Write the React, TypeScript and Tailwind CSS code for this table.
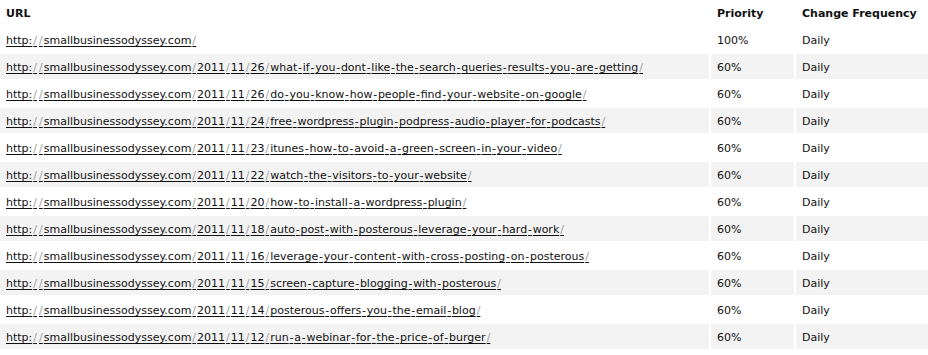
import React from "react";

const rows: [string, string][] = [
  ["http://smallbusinessodyssey.com/", "100%"],
  ["http://smallbusinessodyssey.com/2011/11/26/what-if-you-dont-like-the-search-queries-results-you-are-getting/", "60%"],
  ["http://smallbusinessodyssey.com/2011/11/26/do-you-know-how-people-find-your-website-on-google/", "60%"],
  ["http://smallbusinessodyssey.com/2011/11/24/free-wordpress-plugin-podpress-audio-player-for-podcasts/", "60%"],
  ["http://smallbusinessodyssey.com/2011/11/23/itunes-how-to-avoid-a-green-screen-in-your-video/", "60%"],
  ["http://smallbusinessodyssey.com/2011/11/22/watch-the-visitors-to-your-website/", "60%"],
  ["http://smallbusinessodyssey.com/2011/11/20/how-to-install-a-wordpress-plugin/", "60%"],
  ["http://smallbusinessodyssey.com/2011/11/18/auto-post-with-posterous-leverage-your-hard-work/", "60%"],
  ["http://smallbusinessodyssey.com/2011/11/16/leverage-your-content-with-cross-posting-on-posterous/", "60%"],
  ["http://smallbusinessodyssey.com/2011/11/15/screen-capture-blogging-with-posterous/", "60%"],
  ["http://smallbusinessodyssey.com/2011/11/14/posterous-offers-you-the-email-blog/", "60%"],
  ["http://smallbusinessodyssey.com/2011/11/12/run-a-webinar-for-the-price-of-burger/", "60%"],
];

function Segment({ text }: { text: string }) {
  const bits = text.split("-");
  return (
    <>
      {bits.map((b, i) => (
        <React.Fragment key={i}>
          {i > 0 && <span className="px-[0.75px]">-</span>}
          {b}
        </React.Fragment>
      ))}
    </>
  );
}

function Url({ url }: { url: string }) {
  const parts = url.split("/");
  return (
    <a href="#" className="text-[#111] underline decoration-[#111] underline-offset-2">
      {parts.map((p, i) => (
        <React.Fragment key={i}>
          {i > 0 && <span className="text-[#a0a0a0] px-[1px]">/</span>}
          <Segment text={p} />
        </React.Fragment>
      ))}
    </a>
  );
}

const cell = "h-[25px] flex items-center pl-[6px] pt-[4px]";

export default function App() {
  return (
    <div
      className="w-[928px] h-[355px] bg-white text-[11px] text-[#111] overflow-hidden"
      style={{ fontFamily: '"DejaVu Sans", Verdana, sans-serif' }}
    >
      <div className="grid grid-cols-[709px_83px_1fr] gap-x-[2px] gap-y-[2px]">
        <div className={`${cell} font-bold`}>URL</div>
        <div className={`${cell} font-bold`}>Priority</div>
        <div className={`${cell} font-bold`}>Change Frequency</div>
        {rows.map(([url, pr], i) => {
          const bg = i % 2 === 1 ? "bg-[#f3f3f3]" : "bg-white";
          return (
            <React.Fragment key={i}>
              <div className={`${cell} whitespace-nowrap ${bg}`}>
                <Url url={url} />
              </div>
              <div className={`${cell} ${bg}`}>{pr}</div>
              <div className={`${cell} ${bg}`}>Daily</div>
            </React.Fragment>
          );
        })}
      </div>
    </div>
  );
}
